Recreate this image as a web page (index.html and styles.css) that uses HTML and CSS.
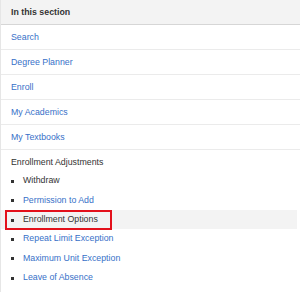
FILE: index.html
```html
<!DOCTYPE html>
<html lang="en">

<head>
    <meta charset="UTF-8">
    <meta name="viewport" content="width=device-width, initial-scale=1.0">
    <title>In this section</title>
    <link rel="stylesheet" href="styles.css">
</head>

<body>
    <div class="sectionNav">
        <div class="navHead">In this section</div>
        <ul class="navList">
            <li><a href="#">Search</a></li>
            <li><a href="#">Degree Planner</a></li>
            <li><a href="#">Enroll</a></li>
            <li><a href="#">My Academics</a></li>
            <li><a href="#">My Textbooks</a></li>
        </ul>
        <div class="navGroup">
            <div class="groupLabel">Enrollment Adjustments</div>
            <ul class="subList">
                <li class="current">Withdraw</li>
                <li><a href="#">Permission to Add</a></li>
                <li class="current active">
                    Enrollment Options
                    <span class="mark"></span>
                </li>
                <li><a href="#">Repeat Limit Exception</a></li>
                <li><a href="#">Maximum Unit Exception</a></li>
                <li><a href="#">Leave of Absence</a></li>
            </ul>
        </div>
    </div>
</body>

</html>
```

FILE: styles.css
```css
* {
    padding: 0;
    margin: 0;
    list-style: none;
    box-sizing: border-box;
}

body {
    font-family: "Liberation Sans", Arial, sans-serif;
    font-size: 8.8px;
    color: #333;
    background: #fff;
}

a {
    color: #3770c8;
    text-decoration: none;
}

.sectionNav {
    width: 300px;
    height: 292px;
    border-left: 1px solid #e6e6e6;
}

.navHead {
    height: 25px;
    line-height: 24px;
    padding-left: 10px;
    font-weight: bold;
    background: #f3f3f3;
    border-bottom: 1px solid #d6d6d6;
}

.navList li {
    height: 25px;
    line-height: 24px;
    padding-left: 10px;
    border-bottom: 1px solid #ebebeb;
}

.navGroup {
    padding-top: 6px;
}

.groupLabel {
    line-height: 12.6px;
    padding-left: 10px;
    margin-bottom: 2.7px;
}

.subList {
    margin-right: 3px;
}

.subList li {
    position: relative;
    height: 19.4px;
    line-height: 19.4px;
    padding-left: 22px;
}

/* 小方块圆点 */
.subList li::before {
    content: "";
    position: absolute;
    left: 10px;
    top: 8.5px;
    width: 3px;
    height: 3px;
    background: #333;
}

.subList li.active {
    background: #f3f3f3;
}

.mark {
    position: absolute;
    left: 4px;
    top: 0;
    width: 107px;
    height: 20px;
    border: 2.5px solid #e3101b;
}
```
